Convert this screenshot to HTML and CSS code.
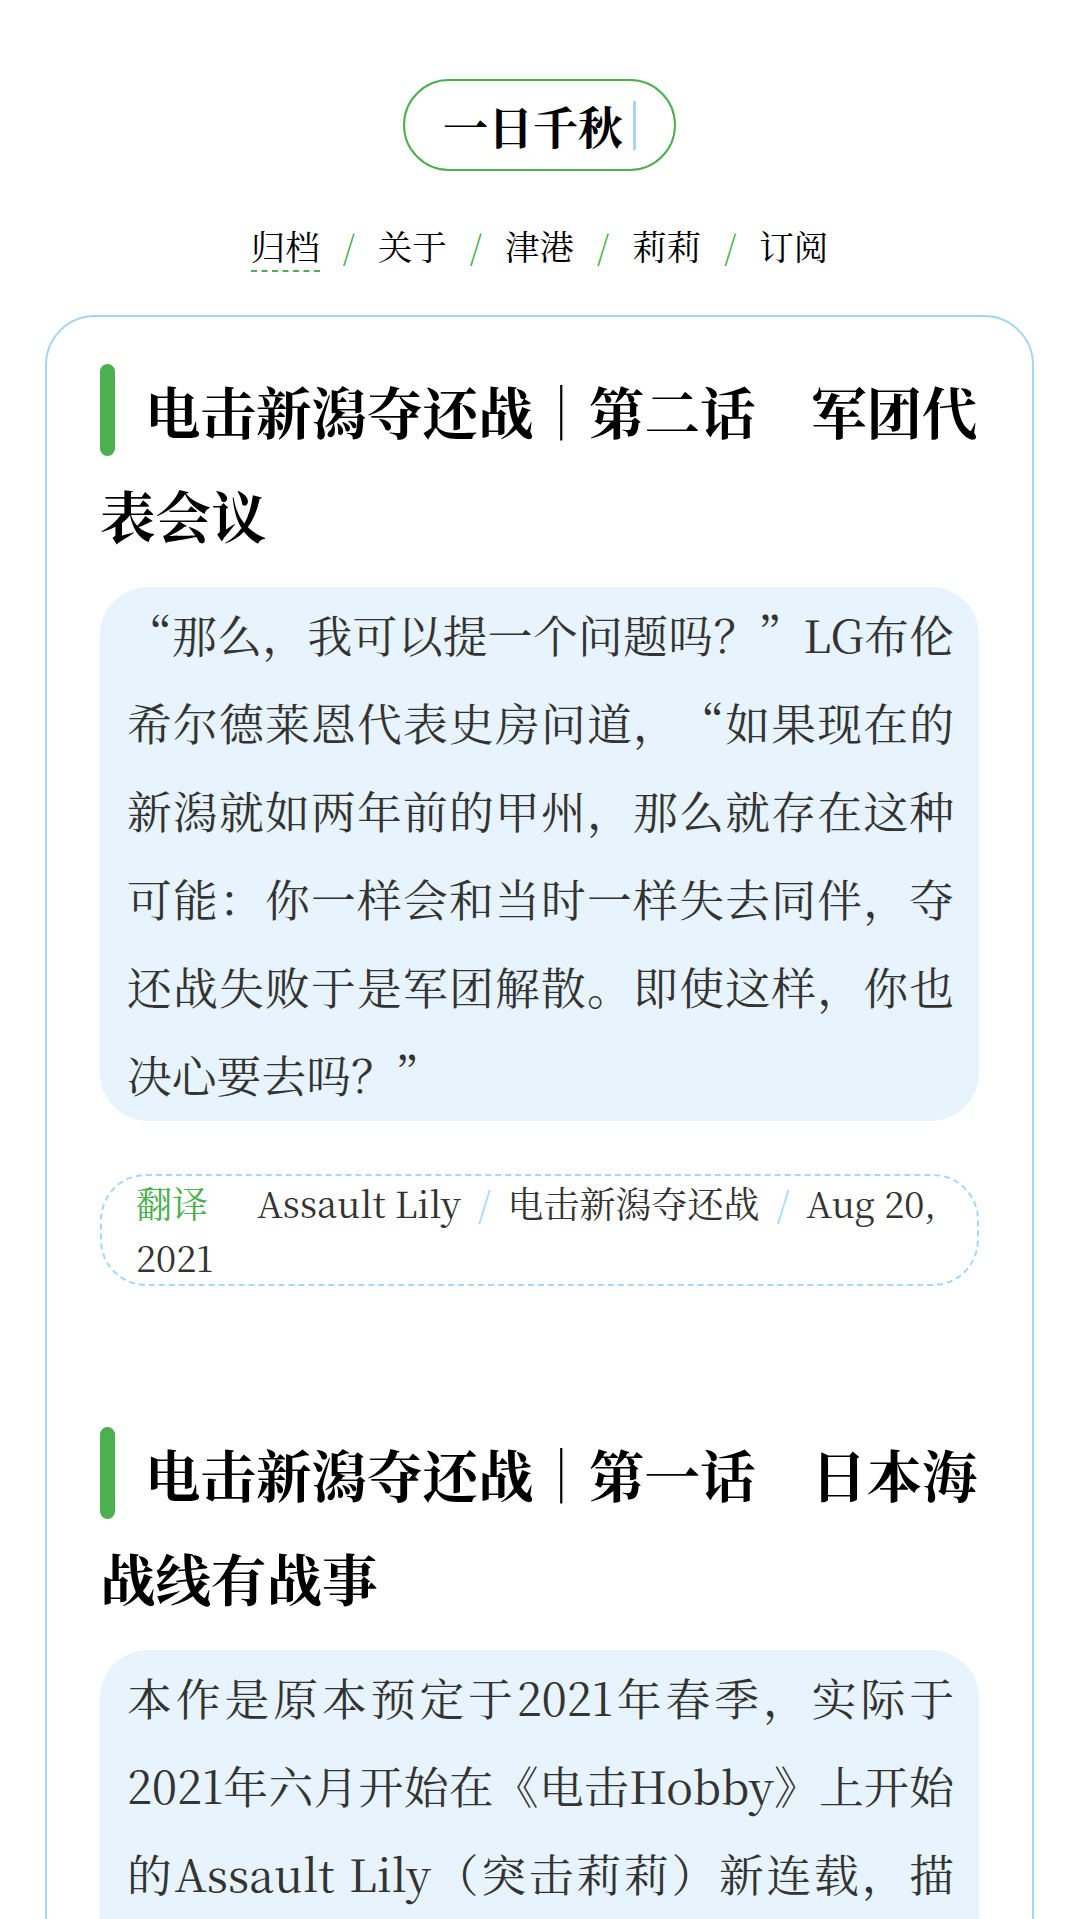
FILE: index.html
```html
<!DOCTYPE html>
<html lang="zh-CN">
<head>
<meta charset="utf-8">
<title>一日千秋</title>
<link rel="stylesheet" href="styles.css">
</head>
<body>
<header class="site-header">
  <div class="logo"><span class="logo-text">一日千秋</span><span class="cursor"></span></div>
  <nav class="nav">
    <a class="nav-link active" href="#">归档</a><span class="sep">/</span>
    <a class="nav-link" href="#">关于</a><span class="sep">/</span>
    <a class="nav-link" href="#">津港</a><span class="sep">/</span>
    <a class="nav-link" href="#">莉莉</a><span class="sep">/</span>
    <a class="nav-link" href="#">订阅</a>
  </nav>
</header>
<main class="main">
  <section class="card">
    <article class="post">
      <h2 class="post-title"><span class="title-bar"></span>电击新潟夺还战｜第二话　军团代表会议</h2>
      <div class="post-excerpt">“那么，我可以提一个问题吗？”LG布伦希尔德莱恩代表史房问道，“如果现在的新潟就如两年前的甲州，那么就存在这种可能：你一样会和当时一样失去同伴，夺还战失败于是军团解散。即使这样，你也决心要去吗？”</div>
      <div class="post-meta"><span class="meta-cat">翻译</span><span class="meta-item">Assault Lily</span><span class="meta-sep">/</span><span class="meta-item">电击新潟夺还战</span><span class="meta-sep">/</span><span class="meta-item">Aug 20, 2021</span></div>
    </article>
    <article class="post">
      <h2 class="post-title"><span class="title-bar"></span>电击新潟夺还战｜第一话　日本海战线有战事</h2>
      <div class="post-excerpt">本作是原本预定于2021年春季，实际于2021年六月开始在《电击Hobby》上开始的Assault Lily（突击莉莉）新连载，描写了新潟夺还战中各军团的故事。本系列为该连载的翻译。</div>
      <div class="post-meta"><span class="meta-cat">翻译</span><span class="meta-item">Assault Lily</span><span class="meta-sep">/</span><span class="meta-item">电击新潟夺还战</span><span class="meta-sep">/</span><span class="meta-item">Aug 19, 2021</span></div>
    </article>
  </section>
</main>
</body>
</html>
```

FILE: styles.css
```css
html, body {
  margin: 0;
  padding: 0;
  background: #ffffff;
}

body {
  font-family: "Noto Serif CJK SC", "Noto Serif SC", "Source Han Serif SC", "Noto Sans CJK SC", serif;
  color: #000;
  text-spacing-trim: space-all;
}

.site-header {
  display: flex;
  flex-direction: column;
  align-items: center;
  padding-top: 79px;
}

.logo {
  display: flex;
  align-items: center;
  height: 88px;
  padding: 0 38px;
  border: 2.5px solid #4caf50;
  border-radius: 50px;
}

.logo-text {
  font-size: 45px;
  font-weight: 700;
  line-height: 1;
  color: #000;
}

.cursor {
  width: 3px;
  height: 49px;
  margin-left: 10px;
  background: #a6d6fb;
}

.nav {
  display: flex;
  align-items: flex-start;
  margin-top: 54px;
  font-size: 34.5px;
  line-height: 40px;
}

.nav-link {
  color: #000;
  text-decoration: none;
  padding-bottom: 5px;
  border-bottom: 2px solid transparent;
}

.nav-link.active {
  border-bottom: 2px dashed #4caf50;
}

.sep {
  margin: 0 23px;
  color: #4caf50;
}

.main {
  padding: 0 45px;
}

.card {
  margin-top: 43px;
  border: 2px solid #a3d5fb;
  border-radius: 50px;
  padding: 41px 53px 60px;
}

.post + .post {
  margin-top: 135px;
}

.post-title {
  margin: 0;
  font-size: 55.5px;
  font-weight: 700;
  line-height: 104px;
  color: #000;
}

.title-bar {
  display: inline-block;
  width: 15px;
  height: 92px;
  margin-right: 30px;
  border-radius: 8px;
  background: #4caf50;
  vertical-align: -22px;
}

.post-excerpt {
  margin-top: 21px;
  padding: 3px 25px 3px 27px;
  background: #e8f4fd;
  border-radius: 48px;
  font-size: 44.8px;
  line-height: 88px;
  color: #333;
  text-align: justify;
}

.post-meta {
  margin-top: 53px;
  padding: 0 30px 0 34px;
  border: 2px dashed #a6d8fb;
  border-radius: 46px;
  font-size: 36px;
  line-height: 54px;
  color: #333;
}

.meta-cat {
  color: #4caf50;
  margin-right: 49px;
}

.meta-sep {
  margin: 0 17px;
  color: #a6d8fb;
}
```
